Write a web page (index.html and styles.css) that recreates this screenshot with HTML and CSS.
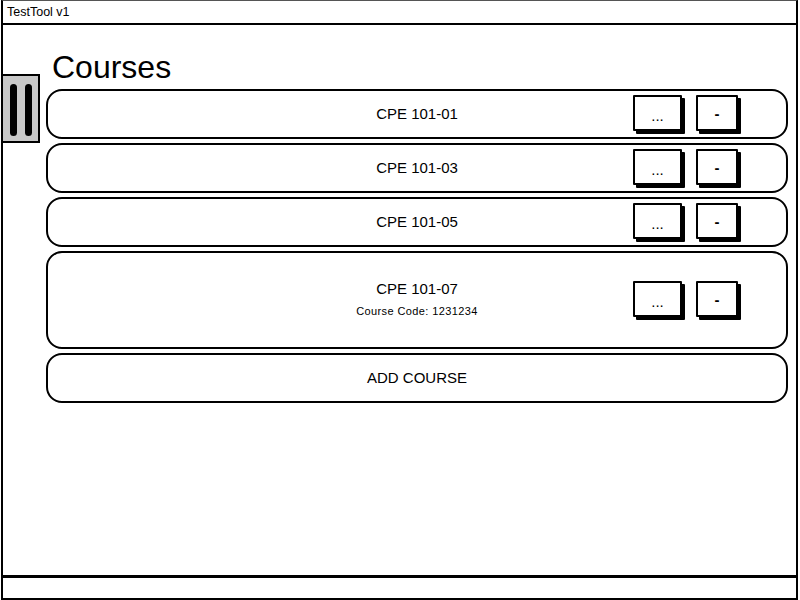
FILE: index.html
```html
<!DOCTYPE html>
<html>
<head>
<meta charset="utf-8">
<link rel="stylesheet" href="styles.css">
</head>
<body>
<div class="frame">
  <div class="titlebar">TestTool v1</div>
  <div class="main">
    <div class="handle"><span class="bar"></span><span class="bar"></span></div>
    <h1 class="heading">Courses</h1>
    <div class="list">
      <div class="row">
        <div class="label"><div class="name">CPE 101-01</div></div>
        <div class="actions"><button class="btn btn-more">...</button><button class="btn btn-minus">-</button></div>
      </div>
      <div class="row">
        <div class="label"><div class="name">CPE 101-03</div></div>
        <div class="actions"><button class="btn btn-more">...</button><button class="btn btn-minus">-</button></div>
      </div>
      <div class="row">
        <div class="label"><div class="name">CPE 101-05</div></div>
        <div class="actions"><button class="btn btn-more">...</button><button class="btn btn-minus">-</button></div>
      </div>
      <div class="row row-tall">
        <div class="label"><div class="name">CPE 101-07</div><div class="code">Course Code: 1231234</div></div>
        <div class="actions"><button class="btn btn-more">...</button><button class="btn btn-minus">-</button></div>
      </div>
      <div class="row row-add">
        <div class="label"><div class="name">ADD COURSE</div></div>
      </div>
    </div>
  </div>
  <div class="statusbar"></div>
</div>
</body>
</html>
```

FILE: styles.css
```css
* { box-sizing: border-box; }
html, body { margin: 0; padding: 0; background: #fff; }
body {
  font-family: "Liberation Sans", Arial, sans-serif;
  color: #000;
  width: 800px;
  height: 600px;
  overflow: hidden;
}
.frame {
  margin-left: 1px;
  width: 797px;
  height: 600px;
  border-left: 2px solid #000;
  border-right: 2px solid #000;
  border-top: 1px solid #555;
  display: flex;
  flex-direction: column;
}
.titlebar {
  height: 24px;
  border-bottom: 2px solid #000;
  font-size: 12.5px;
  line-height: 22px;
  padding-left: 4px;
}
.main {
  position: relative;
  flex: 1;
  padding: 24px 8px 0 43px;
}
.handle {
  position: absolute;
  left: -2px;
  top: 49px;
  width: 39px;
  height: 69px;
  background: #c8c8c8;
  border: 2px solid #000;
  display: flex;
  gap: 8px;
  padding: 8px 0 0 7px;
}
.handle .bar {
  display: block;
  width: 7px;
  height: 52px;
  background: #000;
  border-radius: 4px;
}
.heading {
  margin: 0 0 4px 6px;
  font-size: 32px;
  font-weight: normal;
  line-height: 36px;
}
.list {
  display: flex;
  flex-direction: column;
  gap: 4px;
  width: 742px;
}
.row {
  height: 50px;
  border: 2px solid #000;
  border-radius: 16px;
  display: grid;
  grid-template-columns: 1fr auto 1fr;
  align-items: center;
}
.row-tall { height: 98px; }
.label {
  grid-column: 2;
  text-align: center;
}
.name { font-size: 15px; line-height: 18px; }
.row-tall .name { margin-top: -2px; }
.code { font-size: 11px; line-height: 14px; margin-top: 6px; letter-spacing: 0.4px; }
.actions {
  grid-column: 3;
  justify-self: end;
  display: flex;
  gap: 14px;
  padding-right: 48px;
  padding-bottom: 2px;
}
.btn {
  font-family: "Liberation Sans", Arial, sans-serif;
  font-size: 15px;
  background: #fff;
  border: 2px solid #000;
  border-radius: 1px;
  box-shadow: 3px 3px 0 #000;
  height: 36px;
  padding: 0;
  color: #000;
}
.btn-more { width: 49px; padding-top: 4px; }
.btn-minus { width: 42px; font-weight: bold; }
.statusbar {
  height: 25px;
  border-top: 3px solid #000;
  border-bottom: 2px solid #000;
}
```
